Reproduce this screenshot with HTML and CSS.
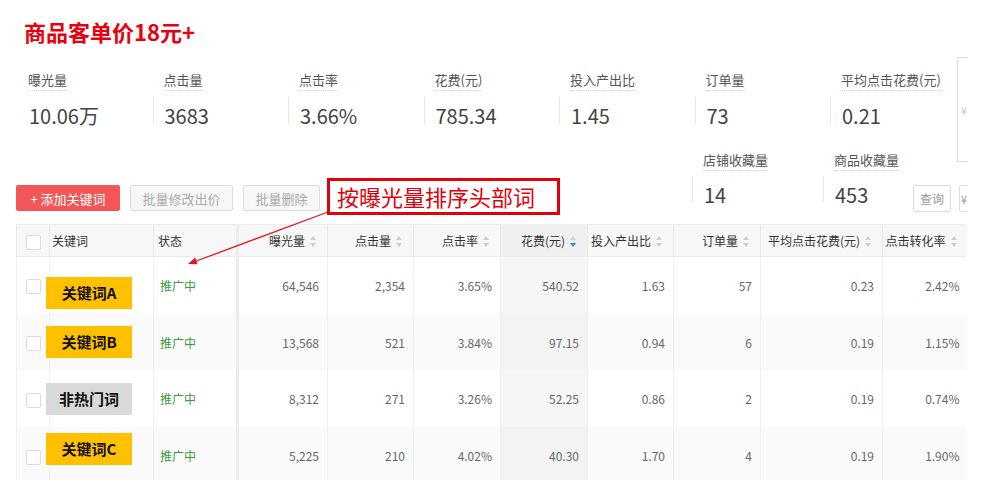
FILE: index.html
```html
<!DOCTYPE HTML>
<html>
<head>
	<meta http-equiv="Content-Type" content="text/html; charset=utf-8">
	<meta name="viewport" content="width=device-width, initial-scale=1">
	<title>关键词推广数据</title>

	<link rel="stylesheet" href="styles.css">
</head>
<body>
<div class="page">
	<h1 class="title">商品客单价18元+</h1>

	<!-- 汇总指标 -->
	<div class="stats">
		<div class="stat stat-first">
			<span class="stat-label">曝光量</span>
			<div class="stat-value">10.06万</div>
		</div>
		<div class="stat">
			<span class="stat-label">点击量</span>
			<div class="stat-value">3683</div>
		</div>
		<div class="stat">
			<span class="stat-label">点击率</span>
			<div class="stat-value">3.66%</div>
		</div>
		<div class="stat">
			<span class="stat-label">花费(元)</span>
			<div class="stat-value">785.34</div>
		</div>
		<div class="stat">
			<span class="stat-label">投入产出比</span>
			<div class="stat-value">1.45</div>
		</div>
		<div class="stat">
			<span class="stat-label">订单量</span>
			<div class="stat-value">73</div>
		</div>
		<div class="stat stat-last">
			<span class="stat-label">平均点击花费(元)</span>
			<div class="stat-value">0.21</div>
		</div>
		<div class="stat-custom">¥</div>
	</div>

	<div class="toolbar">
		<div class="actions">
			<button class="btn btn-add">+ 添加关键词</button>
			<button class="btn btn-gray btn-price">批量修改出价</button>
			<button class="btn btn-gray btn-del">批量删除</button>
		</div>
		<div class="stats-more">
			<div class="stat stat-shop">
				<span class="stat-label">店铺收藏量</span>
				<div class="stat-value">14</div>
			</div>
			<div class="stat stat-goods">
				<span class="stat-label">商品收藏量</span>
				<div class="stat-value">453</div>
			</div>
		</div>
		<div class="query">
			<button class="btn-query">查询</button>
			<button class="btn-query btn-export">¥</button>
		</div>
	</div>

	<!-- 关键词列表 -->
	<div class="grid-wrap">
		<table class="grid">
			<colgroup>
				<col style="width:33px">
				<col style="width:104px">
				<col style="width:84px">
				<col style="width:90px">
				<col style="width:86px">
				<col style="width:87px">
				<col style="width:87px">
				<col style="width:86px">
				<col style="width:87px">
				<col style="width:122px">
				<col style="width:85px">
			</colgroup>
			<thead>
				<tr>
					<th class="c-check"><span class="check"></span></th>
					<th class="c-word">关键词</th>
					<th class="c-status">状态</th>
					<th class="num">曝光量<i class="sort"></i></th>
					<th class="num">点击量<i class="sort"></i></th>
					<th class="num">点击率<i class="sort"></i></th>
					<th class="num sorted">花费(元)<i class="sort desc"></i></th>
					<th class="num">投入产出比<i class="sort"></i></th>
					<th class="num">订单量<i class="sort"></i></th>
					<th class="num">平均点击花费(元)<i class="sort"></i></th>
					<th class="num">点击转化率<i class="sort"></i></th>
				</tr>
			</thead>
			<tbody>
				<tr>
					<td class="c-check"><span class="check"></span></td>
					<td class="c-word"><span class="tag tag-hot tag-low">关键词A</span></td>
					<td class="c-status">推广中</td>
					<td class="num">64,546</td>
					<td class="num">2,354</td>
					<td class="num">3.65%</td>
					<td class="num sorted">540.52</td>
					<td class="num">1.63</td>
					<td class="num">57</td>
					<td class="num">0.23</td>
					<td class="num">2.42%</td>
				</tr>
				<tr class="even">
					<td class="c-check"><span class="check"></span></td>
					<td class="c-word"><span class="tag tag-hot">关键词B</span></td>
					<td class="c-status">推广中</td>
					<td class="num">13,568</td>
					<td class="num">521</td>
					<td class="num">3.84%</td>
					<td class="num sorted">97.15</td>
					<td class="num">0.94</td>
					<td class="num">6</td>
					<td class="num">0.19</td>
					<td class="num">1.15%</td>
				</tr>
				<tr>
					<td class="c-check"><span class="check"></span></td>
					<td class="c-word"><span class="tag tag-cold">非热门词</span></td>
					<td class="c-status">推广中</td>
					<td class="num">8,312</td>
					<td class="num">271</td>
					<td class="num">3.26%</td>
					<td class="num sorted">52.25</td>
					<td class="num">0.86</td>
					<td class="num">2</td>
					<td class="num">0.19</td>
					<td class="num">0.74%</td>
				</tr>
				<tr class="even">
					<td class="c-check"><span class="check"></span></td>
					<td class="c-word"><span class="tag tag-hot tag-high">关键词C</span></td>
					<td class="c-status">推广中</td>
					<td class="num">5,225</td>
					<td class="num">210</td>
					<td class="num">4.02%</td>
					<td class="num sorted">40.30</td>
					<td class="num">1.70</td>
					<td class="num">4</td>
					<td class="num">0.19</td>
					<td class="num">1.90%</td>
				</tr>
			</tbody>
		</table>
	</div>

	<!-- 标注 -->
	<svg class="note-arrow" width="968" height="487" viewBox="0 0 968 487">
		<line x1="328" y1="212" x2="195" y2="261.5" stroke="#e5161f" stroke-width="1.3"/>
		<polygon points="188,264 197.6,264.2 195.2,257.6" fill="#e5161f"/>
	</svg>
	<div class="note">按曝光量排序头部词</div>
</div>
</body>
</html>
```

FILE: styles.css
```css
body{
	margin: 0;
	background-color: #fff;
	font-family: "Noto Sans CJK SC", "Noto Sans", sans-serif;
}
.page{
	position: relative;
	width: 968px;
	height: 487px;
	overflow: hidden;
	padding-top: 16px;
	box-sizing: border-box;
}
.title{
	margin: 0 0 0 24px;
	height: 30px;
	line-height: 30px;
	font-size: 22px;
	font-weight: bold;
	color: #e8000f;
}

/* 指标 */
.stats{
	display: flex;
	height: 94px;
	margin-top: 11px;
	padding-left: 17px;
}
.stat{
	width: 135.5px;
	flex-shrink: 0;
	padding-left: 11px;
	padding-top: 14px;
	box-sizing: border-box;
	font-size: 13px;
	line-height: 18px;
}
.stat-last{
	width: 127px;
}
.stat-label{
	display: block;
	width: fit-content;
	color: #555;
	padding-bottom: 1px;
	border-bottom: 1px dotted #d6d6d6;
}
.stat-value{
	margin: 6px 0 0 -11px;
	padding-left: 11px;
	height: 27px;
	line-height: 38px;
	font-size: 20px;
	color: #444;
	border-left: 1px solid #e8e8e8;
	white-space: nowrap;
}
.stat-first .stat-value{
	border-left-color: transparent;
}
.stat-custom{
	flex-shrink: 0;
	width: 80px;
	height: 105px;
	border: 1px solid #dcdcdc;
	box-sizing: border-box;
	padding: 44px 0 0 3px;
	font-size: 11px;
	color: #c8c8c8;
}

/* 工具栏 */
.toolbar{
	display: flex;
	align-items: flex-end;
	height: 61px;
}
.actions{
	display: flex;
	gap: 10px;
	padding-left: 16px;
	margin-bottom: 1px;
}
.btn{
	height: 26px;
	padding: 0;
	border: 1px solid #ddd;
	border-radius: 2px;
	font-family: inherit;
	font-size: 13px;
}
.btn-add{
	width: 104px;
	background-color: #f35656;
	border-color: #f35656;
	color: #fff;
}
.btn-gray{
	background-color: #f7f7f7;
	color: #aaa;
}
.btn-price{
	width: 103px;
}
.btn-del{
	width: 77px;
}
.stats-more{
	display: flex;
	margin-left: auto;
	padding-bottom: 10px;
}
.stats-more .stat{
	padding-top: 0;
}
.stats-more .stat-value{
	margin-top: 5px;
	height: 26px;
}
.stat-shop{
	width: 131px;
}
.stat-goods{
	width: 90px;
}
.query{
	display: flex;
	gap: 8px;
	width: 55px;
	flex-shrink: 0;
}
.btn-query{
	flex-shrink: 0;
	width: 38px;
	height: 27px;
	padding: 0;
	background-color: #fff;
	border: 1px solid #ddd;
	border-radius: 2px;
	font-family: inherit;
	font-size: 12px;
	color: #999;
}
.btn-export{
	width: 64px;
	text-align: left;
	padding-left: 1px;
	font-size: 11px;
}

/* 表格 */
.grid-wrap{
	margin: 12px 0 0 16px;
	width: 951px;
	height: 255px;
	overflow: hidden;
	border-top: 1px solid #eee;
}
.grid{
	width: 951px;
	table-layout: fixed;
	border-collapse: collapse;
	font-size: 12px;
}
.grid th{
	height: 31px;
	padding: 0 10px 0 0;
	background-color: #f7f7f7;
	border-left: 1px solid #eaeaea;
	border-bottom: 1px solid #eaeaea;
	font-weight: normal;
	color: #333;
	text-align: left;
	white-space: nowrap;
}
.grid td{
	height: 56.7px;
	padding: 0 8px 0 0;
	border-left: 1px solid #f0f0f0;
	color: #666;
	white-space: nowrap;
}
.grid tr.even td{
	background-color: #fafafa;
}
.grid .num{
	text-align: right;
}
.grid th.sorted{
	background-color: #f0f0f0;
}
.grid td.sorted{
	background-color: #f6f6f6;
}
.grid tr.even td.sorted{
	background-color: #f3f3f3;
}
.grid .c-check{
	padding: 0;
	text-align: center;
}
.grid th.c-word{
	padding-left: 2px;
}
.grid td.c-word{
	padding: 0;
}
.grid th.c-status{
	padding-left: 4px;
	border-right: 3px solid #ececec;
}
.grid td.c-status{
	padding-left: 6px;
	color: #3c9a3f;
	border-right: 3px solid #ececec;
}
.check{
	display: inline-block;
	width: 13px;
	height: 13px;
	border: 1px solid #dcdcdc;
	border-radius: 2px;
	background-color: #fff;
	vertical-align: middle;
}
.sort{
	display: inline-block;
	position: relative;
	width: 7px;
	height: 11px;
	margin-left: 5px;
	vertical-align: -1px;
}
.sort:before,
.sort:after{
	content: "";
	position: absolute;
	left: 0;
	border-left: 3.5px solid transparent;
	border-right: 3.5px solid transparent;
}
.sort:before{
	top: 0;
	border-bottom: 4px solid #cfcfcf;
}
.sort:after{
	bottom: 0;
	border-top: 4px solid #cfcfcf;
}
.sort.desc:after{
	border-top-color: #2d8ae6;
}

/* 关键词标签，盖在表格线上 */
.tag{
	position: relative;
	z-index: 1;
	display: block;
	width: 86px;
	height: 32px;
	line-height: 32px;
	margin-left: -4px;
	text-align: center;
	font-size: 15px;
	font-weight: bold;
	color: #111;
}
.tag-hot{
	background-color: #ffc000;
}
.tag-cold{
	background-color: #d9d9d9;
}
.tag-low{
	margin-top: 16px;
}
.tag-high{
	margin-bottom: 12px;
}

/* 标注 */
.note-arrow{
	position: absolute;
	left: 0;
	top: 0;
	pointer-events: none;
}
.note{
	position: absolute;
	left: 327px;
	top: 178px;
	width: 233px;
	height: 37px;
	box-sizing: border-box;
	border: 3px solid #e3000b;
	background-color: #fff;
	padding-left: 7px;
	line-height: 31px;
	font-size: 22px;
	color: #e3000b;
	white-space: nowrap;
}
```
